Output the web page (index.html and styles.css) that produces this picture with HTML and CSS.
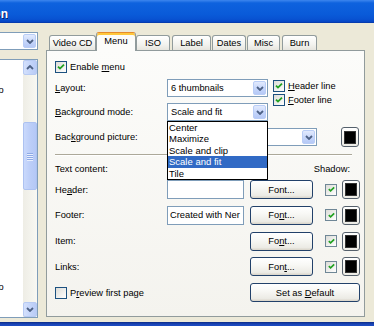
FILE: index.html
```html
<!DOCTYPE html>
<html lang="en">
<head>
	<meta charset="UTF-8">
	<title>Menu</title>
	<link rel="stylesheet" href="styles.css">
</head>
<body>
<div class="window">
	<div class="titlebar"><div class="title"><span>Configuration</span></div></div>

	<div class="client">
		<!-- left side, cut off by the screenshot -->
		<div class="side">
			<div class="combo side_combo">
				<span class="drop"><svg width="8" height="5" viewBox="0 0 8 5"><polyline points="1,1 4,4 7,1" fill="none" stroke="#4d6185" stroke-width="1.8"/></svg></span>
			</div>
			<div class="listbox">
				<div class="items">
					<div class="item item1">Video</div>
					<div class="item item2">Audio</div>
				</div>
				<div class="vscroll">
					<span class="sbtn"><svg width="8" height="5" viewBox="0 0 8 5"><polyline points="1,4 4,1 7,4" fill="none" stroke="#4d6185" stroke-width="1.8"/></svg></span>
					<span class="thumb"><i></i><i></i><i></i><i></i></span>
					<span class="sbtn down"><svg width="8" height="5" viewBox="0 0 8 5"><polyline points="1,1 4,4 7,1" fill="none" stroke="#4d6185" stroke-width="1.8"/></svg></span>
				</div>
			</div>
		</div>

		<!-- tab control -->
		<div class="tabs">
			<div class="tab_row">
				<div class="tab t_video">Video CD</div>
				<div class="tab t_menu active">Menu</div>
				<div class="tab t_iso">ISO</div>
				<div class="tab t_label">Label</div>
				<div class="tab t_dates">Dates</div>
				<div class="tab t_misc">Misc</div>
				<div class="tab t_burn">Burn</div>
			</div>

			<div class="panel">
				<div class="check_line">
					<span class="cb"><svg width="10" height="10" viewBox="0 0 10 10"><path d="M2 4.6 L4 6.6 L8 2.6" fill="none" stroke="#21a121" stroke-width="1.8"/></svg></span>
					<span>Enable <u>m</u>enu</span>
				</div>

				<div class="row r_layout">
					<span class="lbl"><u>L</u>ayout:</span>
					<div class="combo"><span>6 thumbnails</span>
						<span class="drop"><svg width="8" height="5" viewBox="0 0 8 5"><polyline points="1,1 4,4 7,1" fill="none" stroke="#4d6185" stroke-width="1.8"/></svg></span>
					</div>
					<div class="lines">
						<div class="check_line">
							<span class="cb"><svg width="10" height="10" viewBox="0 0 10 10"><path d="M2 4.6 L4 6.6 L8 2.6" fill="none" stroke="#21a121" stroke-width="1.8"/></svg></span>
							<span><u>H</u>eader line</span>
						</div>
						<div class="check_line">
							<span class="cb"><svg width="10" height="10" viewBox="0 0 10 10"><path d="M2 4.6 L4 6.6 L8 2.6" fill="none" stroke="#21a121" stroke-width="1.8"/></svg></span>
							<span><u>F</u>ooter line</span>
						</div>
					</div>
				</div>

				<div class="row r_mode">
					<span class="lbl"><u>B</u>ackground mode:</span>
					<div class="combo"><span>Scale and fit</span>
						<span class="drop"><svg width="8" height="5" viewBox="0 0 8 5"><polyline points="1,1 4,4 7,1" fill="none" stroke="#4d6185" stroke-width="1.8"/></svg></span>
						<ul class="droplist">
							<li>Center</li>
							<li>Maximize</li>
							<li>Scale and clip</li>
							<li class="sel">Scale and fit</li>
							<li>Tile</li>
						</ul>
					</div>
				</div>

				<div class="row r_pic">
					<span class="lbl">Bac<u>k</u>ground picture:</span>
					<div class="combo wide">
						<span class="drop"><svg width="8" height="5" viewBox="0 0 8 5"><polyline points="1,1 4,4 7,1" fill="none" stroke="#4d6185" stroke-width="1.8"/></svg></span>
					</div>
					<span class="swatch pic_swatch"><i></i></span>
				</div>

				<div class="sep"></div>

				<div class="text_head"><span>Text content:</span><span>Shadow:</span></div>

				<div class="text_grid">
					<span class="lbl">He<u>a</u>der:</span>
					<div class="edit"></div>
					<button class="btn"><span>Font...</span></button>
					<span class="cb dim"><svg width="9" height="9" viewBox="0 0 10 10"><path d="M2 4.6 L4 6.6 L8 2.6" fill="none" stroke="#21a121" stroke-width="1.8"/></svg></span>
					<span class="swatch"><i></i></span>

					<span class="lbl">Footer:</span>
					<div class="edit">Created with Ner</div>
					<button class="btn"><span>Fo<u>n</u>t...</span></button>
					<span class="cb dim"><svg width="9" height="9" viewBox="0 0 10 10"><path d="M2 4.6 L4 6.6 L8 2.6" fill="none" stroke="#21a121" stroke-width="1.8"/></svg></span>
					<span class="swatch"><i></i></span>

					<span class="lbl">Item:</span>
					<span></span>
					<button class="btn"><span>Fo<u>n</u>t...</span></button>
					<span class="cb dim"><svg width="9" height="9" viewBox="0 0 10 10"><path d="M2 4.6 L4 6.6 L8 2.6" fill="none" stroke="#21a121" stroke-width="1.8"/></svg></span>
					<span class="swatch"><i></i></span>

					<span class="lbl">Links:</span>
					<span></span>
					<button class="btn"><span>Fon<u>t</u>...</span></button>
					<span class="cb dim"><svg width="9" height="9" viewBox="0 0 10 10"><path d="M2 4.6 L4 6.6 L8 2.6" fill="none" stroke="#21a121" stroke-width="1.8"/></svg></span>
					<span class="swatch"><i></i></span>

					<div class="check_line preview">
						<span class="cb"></span>
						<span>P<u>r</u>eview first page</span>
					</div>
					<button class="btn set_default"><span>Set as <u>D</u>efault</span></button>
				</div>
			</div>
		</div>
	</div>

	<div class="frame_bottom"></div>
</div>
</body>
</html>
```

FILE: styles.css
```css
*{
	margin:0;
	padding:0;
	box-sizing:border-box;
}

body{
	width:374px;
	height:326px;
	overflow:hidden;
	background-color:#ece9d8;
	font-family:"Liberation Sans", Arial, sans-serif;
	font-size:9.3px;
	color:#000;
}

u{
	text-decoration:underline;
	text-underline-offset:1px;
}

.window{
	height:326px;
	display:flex;
	flex-direction:column;
}

/* title bar */
.titlebar{
	height:23px;
	flex:none;
	background:linear-gradient(#3d86ee 0, #0e62de 3px, #0a5bd9 14px, #0853d2 19px, #0644c4 22px, #053299 23px);
}

.title{
	width:8px;
	height:23px;
	padding-top:5px;
	display:flex;
	justify-content:flex-end;
	align-items:center;
	overflow:hidden;
	white-space:nowrap;
	color:#fff;
	font-size:12px;
	font-weight:bold;
	text-shadow:1px 1px #0a1c6e;
}

.client{
	flex:1;
	display:flex;
	padding-top:9px;
}

.frame_bottom{
	height:4px;
	flex:none;
	background:linear-gradient(#0c2a86 0, #1843b5 2px, #1d4cc2 4px);
}

/* left column */
.side{
	width:79px;
	margin-left:-41px;
	margin-right:8px;
	flex:none;
}

.combo{
	position:relative;
	width:101px;
	height:18px;
	flex:none;
	padding-left:3px;
	display:flex;
	align-items:center;
	background-color:#fff;
	border:1px solid #7f9db9;
	white-space:nowrap;
}

.side_combo{
	width:79px;
}

.drop{
	position:absolute;
	right:1px;
	top:1px;
	bottom:1px;
	width:13px;
	display:flex;
	align-items:center;
	justify-content:center;
	border:1px solid #b9cdf6;
	border-radius:2px;
	background:linear-gradient(#e2eafd, #c3d4fa 60%, #b6c9f6);
}

.listbox{
	height:259px;
	margin-top:9px;
	display:flex;
	background-color:#fff;
	border:1px solid #7f9db9;
}

.items{
	flex:1;
	padding-left:20px;
	white-space:nowrap;
	overflow:hidden;
}

.item{
	height:12px;
	line-height:12px;
}

.item1{
	margin-top:24px;
}

.item2{
	margin-top:185px;
}

.vscroll{
	width:14px;
	display:flex;
	flex-direction:column;
	background:linear-gradient(90deg, #eeede5, #f8f8f3);
}

.sbtn{
	height:15px;
	display:flex;
	align-items:center;
	justify-content:center;
	border:1px solid #b7caf3;
	border-radius:2px;
	background:linear-gradient(90deg, #d4e0fc, #c4d5fa 50%, #b9cbf6);
}

.sbtn.down{
	margin-top:auto;
}

.thumb{
	height:68px;
	margin-top:47px;
	display:flex;
	flex-direction:column;
	align-items:center;
	justify-content:center;
	gap:1px;
	border:1px solid #adc2f1;
	border-radius:2px;
	background:linear-gradient(90deg, #cad9fc, #bccef8 50%, #b4c8f6);
}

.thumb i{
	width:6px;
	height:1px;
	background-color:#8eaae6;
	box-shadow:0 1px #e8effe;
}

/* tab control */
.tabs{
	width:319px;
	flex:none;
	display:flex;
	flex-direction:column;
}

.tab_row{
	height:18px;
	padding-left:3px;
	display:flex;
	align-items:flex-end;
	position:relative;
	z-index:1;
}

.tab{
	height:15px;
	display:flex;
	align-items:center;
	justify-content:center;
	border:1px solid #919b9c;
	border-bottom:none;
	border-radius:3px 3px 0 0;
	background:linear-gradient(#fff, #f3f3ef 60%, #e6e5de);
	white-space:nowrap;
}

.tab.active{
	height:19px;
	margin-bottom:-1px;
	padding-bottom:3px;
	border-top-color:#e68b2c;
	box-shadow:inset 0 2px #ffc83c;
	background:#fcfcfa;
}

.t_video{ width:47px; }
.t_menu{ width:40px; }
.t_iso{ width:34px; margin-right:2px; }
.t_label{ width:39px; margin-right:1px; }
.t_dates{ width:34px; margin-right:1px; }
.t_misc{ width:33px; margin-right:2px; }
.t_burn{ width:35px; }

.panel{
	height:267px;
	padding:10px 0 0 8px;
	border:1px solid #919b9c;
	background:linear-gradient(#fcfcfa, #f4f3ee);
}

.check_line{
	height:12px;
	display:flex;
	align-items:center;
	gap:3px;
	white-space:nowrap;
}

.cb{
	width:12px;
	height:12px;
	flex:none;
	display:inline-flex;
	align-items:center;
	justify-content:center;
	border:1px solid #1c5180;
	background:linear-gradient(135deg, #dcdcd7, #fff);
}

.cb.dim{
	border-color:#6f8796;
}

.row{
	height:18px;
	display:flex;
	align-items:center;
}

.lbl{
	width:112px;
	flex:none;
	white-space:nowrap;
}

.r_layout{
	margin-top:6px;
}

.lines{
	align-self:flex-start;
	margin:1px 0 0 5px;
	display:flex;
	flex-direction:column;
	gap:2px;
}

.r_mode{
	margin-top:6px;
	position:relative;
	z-index:2;
}

.r_pic{
	height:20px;
	margin-top:6px;
}

.combo.wide{
	width:150px;
}

.droplist{
	position:absolute;
	left:-1px;
	top:17px;
	width:101px;
	height:59px;
	list-style:none;
	background-color:#fff;
	border:1px solid #000;
	font-size:9.5px;
}

.droplist li{
	height:11.4px;
	line-height:11.4px;
	padding-left:1px;
}

.droplist .sel{
	background-color:#316ac5;
	color:#fff;
}

.swatch{
	width:18px;
	height:19px;
	flex:none;
	display:flex;
	align-items:center;
	justify-content:center;
	border:1px solid #55606c;
	border-radius:3px;
	background:linear-gradient(#fff, #ecebe5);
}

.swatch i{
	width:12px;
	height:13px;
	background-color:#000;
	border:1px solid #333;
}

.pic_swatch{
	height:20px;
	margin-left:24px;
}

.sep{
	width:297px;
	height:2px;
	margin-top:7px;
	border-top:1px solid #aca899;
	border-bottom:1px solid #fff;
}

.text_head{
	width:295px;
	height:12px;
	margin-top:7px;
	display:flex;
	align-items:center;
	justify-content:space-between;
}

.text_grid{
	margin-top:5px;
	display:grid;
	grid-template-columns:112px 83px 75px 17px 18px;
	grid-auto-rows:19px;
	row-gap:6.75px;
	align-items:center;
}

.edit{
	width:77px;
	height:19px;
	padding-left:2px;
	line-height:17px;
	overflow:hidden;
	white-space:nowrap;
	background-color:#fff;
	border:1px solid #7f9db9;
}

.btn{
	width:63px;
	height:19px;
	display:flex;
	align-items:center;
	justify-content:center;
	font:inherit;
	color:#000;
	border:1px solid #22416a;
	border-radius:3px;
	background:linear-gradient(#fff 0, #f8f8f5 40%, #ecebe5 85%, #d8d3c8 100%);
	white-space:nowrap;
}

.preview{
	grid-column:1 / 3;
}

.set_default{
	grid-column:3 / 6;
	width:110px;
}
```
